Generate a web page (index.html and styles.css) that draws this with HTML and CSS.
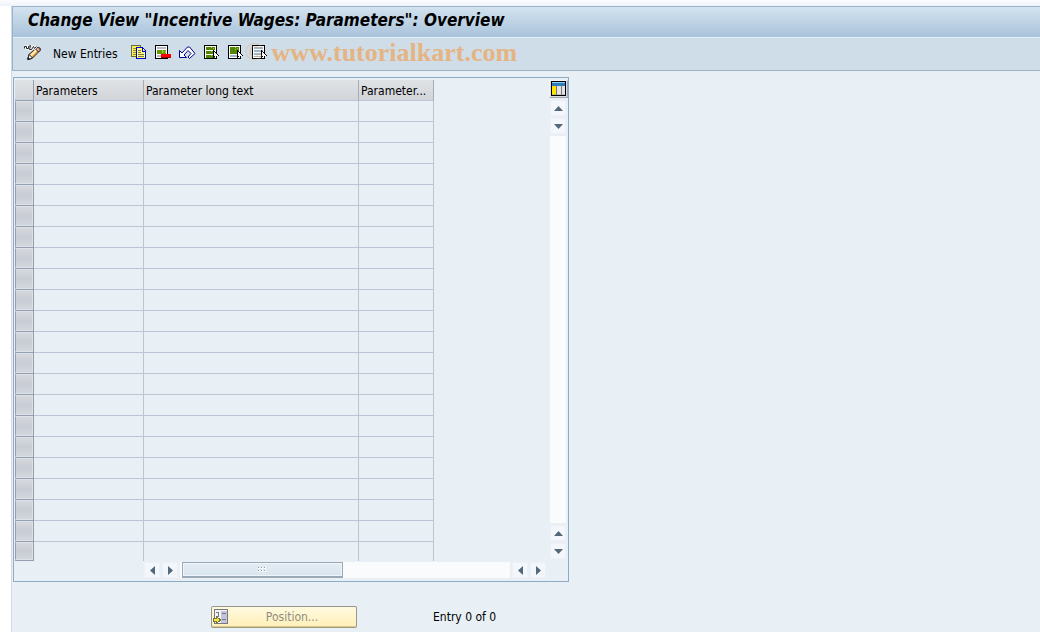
FILE: index.html
```html
<!DOCTYPE html>
<html lang="en">
<head>
    <meta charset="UTF-8">
    <meta name="viewport" content="width=device-width, initial-scale=1.0">
    <title>Change View "Incentive Wages: Parameters": Overview</title>
    <link rel="stylesheet" href="styles.css">
</head>
<body>

    <div class="window">
        <!-- Title and toolbar -->
        <header class="top">
            <h1>Change View "Incentive Wages: Parameters": Overview</h1>
            <div class="toolbar">
                <button class="tool" aria-label="Display / Change">
                    <svg width="17" height="16" viewBox="0 0 17 16">
                        <path d="M4 14.500l1-5 7-6.500 4 .5v2l-8 8z" fill="#f5a030" stroke="#222"/>
                        <path d="M6 10l6-6 1.500 1.500-6 6z" fill="#ffedc0"/>
                        <path d="M11.500 4l1.500-1.500 3 .5v2.500l-1.500 1.500z" fill="#e8b0a0" stroke="#222"/>
                        <path d="M4 14.500l1-5 3.500 3.500z" fill="#fff" stroke="#222"/>
                        <path d="M3.500 15v-3l2.500 2z" fill="#111"/>
                        <path d="M.5 3.500v-2h2v2h2v-2l2-1-1 4h2l2-3 1 2 2-2" fill="none" stroke="#fff" stroke-width="2"/>
                        <path d="M.5 3.500v-2h2v2h2v-2l2-1-1 4h2l2-3 1 2 2-2" fill="none" stroke="#222"/>
                    </svg>
                </button>
                <button class="tool text">New Entries</button>
                <button class="tool" aria-label="Copy As">
                    <svg width="16" height="16" viewBox="0 0 16 16" shape-rendering="crispEdges">
                        <path d="M.5.5h9v11h-9z" fill="#ffee55" stroke="#6b6b3a"/>
                        <path d="M2 3h4v1H2zM2 5h3v1H2zM2 7h3v1H2zM2 9h3v1H2z" fill="#8a8a50"/>
                        <path d="M5.500 2.500h6l3 3v8h-9z" fill="#ffff66" stroke="#0000dd"/>
                        <path d="M11 3h1v3h3v1h-4z" fill="#0000dd"/>
                        <path d="M7 5h3v1H7zM7 7h3v1H7zM7 9h6v1H7zM7 11h6v1H7z" fill="#77774a"/>
                    </svg>
                </button>
                <button class="tool" aria-label="Delete">
                    <svg width="16" height="16" viewBox="0 0 16 16" shape-rendering="crispEdges">
                        <path d="M.5.5h12v13H.5z" fill="#fff" stroke="#000"/>
                        <path d="M2 2h9v2H2zM2 10h9v2H2z" fill="#b8b8c8"/>
                        <path d="M2 5h9v4H2z" fill="#669900"/>
                        <path d="M7 5h1v1h1v1H8v1H7zM10 6h1v2h-1z" fill="#9c3"/>
                        <path d="M6 9h10v4H6z" fill="#f00"/>
                        <path d="M6 12h10v1H6z" fill="#900"/>
                    </svg>
                </button>
                <button class="tool" aria-label="Undo Change">
                    <svg width="17" height="16" viewBox="0 0 17 16">
                        <path d="M.5 5.500v7h7L5 10l4-4.500 3 3L9 12l1.500 1.500 5.500-5L10.500 2h-2L3 8z" fill="#fff" stroke="#00008b"/>
                    </svg>
                </button>
                <button class="tool" aria-label="Select All">
                    <svg width="16" height="16" viewBox="0 0 16 16" shape-rendering="crispEdges">
                        <path d="M.5.500h12v13H.5z" fill="#fff" stroke="#000"/>
                        <path d="M2 2h9v3H2zM2 6h9v3H2zM2 10h9v3H2z" fill="#4f8500"/>
                        <path d="M7 2h1v1H7zM9 3h1v1H9zM7 6h1v1H7zM7 10h1v1H7z" fill="#9c3"/>
                        <path d="M9 5h1v1h1v1h1v1h1v1h1v1h1v1h-2v3h-2v-2h-1v1H9z" fill="#000"/>
                        <path d="M10 7h1v1h1v1h1v1h1v1h-2v2h-1v-2h-1z" fill="#fff"/>
                    </svg>
                </button>
                <button class="tool" aria-label="Select Block">
                    <svg width="16" height="16" viewBox="0 0 16 16" shape-rendering="crispEdges">
                        <path d="M.5.500h12v13H.5z" fill="#fff" stroke="#000"/>
                        <path d="M2 2h9v7H2z" fill="#4f8500"/>
                        <path d="M7 2h1v1H7zM9 3h1v1H9zM7 4h1v1H7zM9 6h1v1H9z" fill="#9c3"/>
                        <path d="M2 10h9v2H2z" fill="#9fb4c8"/>
                        <path d="M9 5h1v1h1v1h1v1h1v1h1v1h1v1h-2v3h-2v-2h-1v1H9z" fill="#000"/>
                        <path d="M10 7h1v1h1v1h1v1h1v1h-2v2h-1v-2h-1z" fill="#fff"/>
                    </svg>
                </button>
                <button class="tool" aria-label="Deselect All">
                    <svg width="16" height="16" viewBox="0 0 16 16" shape-rendering="crispEdges">
                        <path d="M.5.500h12v13H.5z" fill="#fff" stroke="#000"/>
                        <path d="M2 2h9v2H2zM2 5h9v2H2zM2 8h9v2H2zM2 11h9v1H2z" fill="#9fb4c8"/>
                        <path d="M9 5h1v1h1v1h1v1h1v1h1v1h1v1h-2v3h-2v-2h-1v1H9z" fill="#000"/>
                        <path d="M10 7h1v1h1v1h1v1h1v1h-2v2h-1v-2h-1z" fill="#fff"/>
                    </svg>
                    <span class="copyright">©</span>
                </button>
                <span class="site">www.tutorialkart.com</span>
            </div>
        </header>

        <!-- Table control -->
        <main class="panel">
            <table class="grid">
                <colgroup>
                    <col class="col-select">
                    <col class="col-name">
                    <col class="col-text">
                    <col class="col-type">
                </colgroup>
                <thead>
                    <tr>
                        <td></td>
                        <th>Parameters</th>
                        <th>Parameter long text</th>
                        <th>Parameter...</th>
                    </tr>
                </thead>
                <tbody>
                    <tr><td><button class="row-select" aria-label="Select row 1"></button></td><td></td><td></td><td></td></tr>
                    <tr><td><button class="row-select" aria-label="Select row 2"></button></td><td></td><td></td><td></td></tr>
                    <tr><td><button class="row-select" aria-label="Select row 3"></button></td><td></td><td></td><td></td></tr>
                    <tr><td><button class="row-select" aria-label="Select row 4"></button></td><td></td><td></td><td></td></tr>
                    <tr><td><button class="row-select" aria-label="Select row 5"></button></td><td></td><td></td><td></td></tr>
                    <tr><td><button class="row-select" aria-label="Select row 6"></button></td><td></td><td></td><td></td></tr>
                    <tr><td><button class="row-select" aria-label="Select row 7"></button></td><td></td><td></td><td></td></tr>
                    <tr><td><button class="row-select" aria-label="Select row 8"></button></td><td></td><td></td><td></td></tr>
                    <tr><td><button class="row-select" aria-label="Select row 9"></button></td><td></td><td></td><td></td></tr>
                    <tr><td><button class="row-select" aria-label="Select row 10"></button></td><td></td><td></td><td></td></tr>
                    <tr><td><button class="row-select" aria-label="Select row 11"></button></td><td></td><td></td><td></td></tr>
                    <tr><td><button class="row-select" aria-label="Select row 12"></button></td><td></td><td></td><td></td></tr>
                    <tr><td><button class="row-select" aria-label="Select row 13"></button></td><td></td><td></td><td></td></tr>
                    <tr><td><button class="row-select" aria-label="Select row 14"></button></td><td></td><td></td><td></td></tr>
                    <tr><td><button class="row-select" aria-label="Select row 15"></button></td><td></td><td></td><td></td></tr>
                    <tr><td><button class="row-select" aria-label="Select row 16"></button></td><td></td><td></td><td></td></tr>
                    <tr><td><button class="row-select" aria-label="Select row 17"></button></td><td></td><td></td><td></td></tr>
                    <tr><td><button class="row-select" aria-label="Select row 18"></button></td><td></td><td></td><td></td></tr>
                    <tr><td><button class="row-select" aria-label="Select row 19"></button></td><td></td><td></td><td></td></tr>
                    <tr><td><button class="row-select" aria-label="Select row 20"></button></td><td></td><td></td><td></td></tr>
                    <tr><td><button class="row-select" aria-label="Select row 21"></button></td><td></td><td></td><td></td></tr>
                    <tr><td><button class="row-select" aria-label="Select row 22"></button></td><td></td><td></td><td></td></tr>
                </tbody>
            </table>

            <div class="side">
                <button class="config" aria-label="Configuration">
                    <svg width="15" height="15" viewBox="0 0 15 15" shape-rendering="crispEdges">
                        <path d="M0 0h15v15H0z" fill="#000"/>
                        <path d="M1 1h13v4H1z" fill="#2f7fc0"/>
                        <path d="M1 1h13v1H1z" fill="#8fd0f5"/>
                        <path d="M1 5h4v9H1z" fill="#ffe600"/>
                        <path d="M6 5h4v9H6zM11 5h3v9h-3z" fill="#e4e4e4"/>
                        <path d="M5 5h1v9H5zM10 5h1v9h-1z" fill="#777"/>
                        <path d="M1 13h13v1H1z" fill="#999" fill-opacity=".5"/>
                    </svg>
                </button>
                <div class="scroll vertical">
                    <button class="arrow" aria-label="Scroll up"><svg width="9" height="5" viewBox="0 0 9 5"><path d="M0 5l4.500-5L9 5z"/></svg></button>
                    <button class="arrow" aria-label="Scroll down"><svg width="9" height="5" viewBox="0 0 9 5"><path d="M0 0h9L4.500 5z"/></svg></button>
                    <div class="track"></div>
                    <button class="arrow" aria-label="Previous page"><svg width="9" height="5" viewBox="0 0 9 5"><path d="M0 5l4.500-5L9 5z"/></svg></button>
                    <button class="arrow" aria-label="Next page"><svg width="9" height="5" viewBox="0 0 9 5"><path d="M0 0h9L4.500 5z"/></svg></button>
                </div>
            </div>

            <div class="scroll horizontal">
                <button class="arrow" aria-label="Scroll left"><svg width="5" height="9" viewBox="0 0 5 9"><path d="M5 0v9L0 4.500z"/></svg></button>
                <button class="arrow" aria-label="Scroll right"><svg width="5" height="9" viewBox="0 0 5 9"><path d="M0 0l5 4.500L0 9z"/></svg></button>
                <div class="track">
                    <div class="thumb">
                        <svg width="8" height="5" viewBox="0 0 8 5" shape-rendering="crispEdges"><path d="M0 0h2v2H0zM3 0h2v2H3zM6 0h2v2H6zM0 3h2v2H0zM3 3h2v2H3zM6 3h2v2H6z" fill="#fff"/><path d="M0 0h1v1H0zM3 0h1v1H3zM6 0h1v1H6zM0 3h1v1H0zM3 3h1v1H3zM6 3h1v1H6z" fill="#8796a5"/></svg>
                    </div>
                </div>
                <button class="arrow" aria-label="Page left"><svg width="5" height="9" viewBox="0 0 5 9"><path d="M5 0v9L0 4.500z"/></svg></button>
                <button class="arrow" aria-label="Page right"><svg width="5" height="9" viewBox="0 0 5 9"><path d="M0 0l5 4.500L0 9z"/></svg></button>
            </div>
        </main>

        <footer class="status">
            <button class="position">
                <svg width="16" height="16" viewBox="0 0 16 16" shape-rendering="crispEdges">
                    <path d="M1.500.500h13v14h-13z" fill="#f4f4f6" stroke="#77777f"/>
                    <path d="M8 2h6v12H8z" fill="#c4c4dc"/>
                    <path d="M9 4h4v1H9zM9 10h4v1H9zM3 3h3v1H3zM5 4h1v3H5zM3 7h3v1H3z" fill="#77777f"/>
                    <path d="M.5 9.500h3v-2l4 3.500-4 3.500v-2h-3z" fill="#f5e94a" stroke="#77773a"/>
                </svg>
                <span>Position...</span>
            </button>
            <span>Entry 0 of 0</span>
        </footer>
    </div>

</body>
</html>
```

FILE: styles.css
```css
* {
    box-sizing: border-box;
}
body {
    margin: 0;
    padding: 6px 0 0 11px;
    min-height: 100vh;
    display: flex;
    background: linear-gradient(#fbfcfe, #eef3f9 6px, transparent 6px), #fff;
    color: #000;
    font-family: Tahoma, 'DejaVu Sans Condensed', sans-serif;
    font-size: 12px;
    line-height: 16px;
}
button {
    margin: 0;
    padding: 0;
    border: none;
    background: none;
    color: inherit;
    font: inherit;
}
svg {
    display: block;
}
.window {
    flex: 1;
    background-color: #e8f0f6;
    border-left: 1px solid #d0dae5;
}
.top {
    border: 1px solid #9db2c8;
    border-width: 1px 0 1px 1px;
}
h1 {
    margin: 0;
    padding: 3px 15px 7px;
    border-bottom: 1px solid #e6eef5;
    background: linear-gradient(#d3e2ef, #a9c3db);
    font-size: 17px;
    font-style: italic;
    line-height: 20px;
}
.toolbar {
    display: flex;
    align-items: center;
    gap: 8px;
    height: 32px;
    padding: 0 11px 2px;
    background-color: #cfdde8;
}
.tool {
    position: relative;
}
.tool.text {
    padding: 2px 5px 0 4px;
}
.copyright {
    position: absolute;
    left: -7px;
    top: -6px;
    color: #f0a050;
    font-family: 'Liberation Serif', serif;
    font-size: 26px;
    line-height: 26px;
    opacity: 0.3;
}
.site {
    margin-left: -4px;
    color: #e5b483;
    font-family: 'Liberation Serif', serif;
    font-size: 26px;
    font-weight: bold;
    line-height: 28px;
}
.panel {
    display: grid;
    grid-template-columns: auto 16px;
    width: fit-content;
    margin: 6px 0 0 1px;
    padding: 2px 2px 3px 1px;
    border: 1px solid #8eabc6;
}
.grid {
    border-collapse: separate;
    border-spacing: 0;
    table-layout: fixed;
    width: 419px;
    margin-right: 116px;
}
.col-select {
    width: 19px;
}
.col-name {
    width: 110px;
}
.col-text {
    width: 215px;
}
.col-type {
    width: 75px;
}
.grid td, .grid th {
    height: 21px;
    padding: 0;
    border-right: 1px solid #bcc5d3;
    border-bottom: 1px solid #bcc5d3;
}
.grid th, .grid thead td {
    background: linear-gradient(#e0e3e6, #d1d5d9);
    border-right-color: #a3adb9;
}
.grid th {
    padding: 2px 0 0 2px;
    font-weight: normal;
    text-align: left;
}
.grid tr td:first-child {
    border-bottom-color: #94a0b2;
    border-right-color: #94a0b2;
}
.grid tbody tr:last-child td {
    height: 19px;
}
.grid tbody tr:last-child td:not(:first-child) {
    border-bottom: none;
}
.row-select {
    display: block;
    width: 100%;
    height: 20px;
    border: 1px solid #dde1e6;
    border-left-color: #94a0b2;
    background: linear-gradient(#d5d8dd, #c8ccd4, #d2d7de);
}
.grid tbody tr:last-child .row-select {
    height: 18px;
}
.side {
    display: flex;
    flex-direction: column;
    align-items: center;
    gap: 2px;
}
.config {
    padding: 0 1px 1px;
    border: 1px solid #f3f5f7;
    border-right-color: #a0a7b0;
    border-bottom-color: #a0a7b0;
    background-color: #dadde1;
}
.scroll {
    display: flex;
    gap: 2px;
}
.vertical {
    flex: 1;
    flex-direction: column;
    padding-bottom: 2px;
}
.horizontal {
    margin: 1px 4px 0 129px;
}
.arrow {
    display: flex;
    align-items: center;
    justify-content: center;
    width: 16px;
    height: 16px;
    border: 1px solid #edf1f7;
    background-color: #f3f6fb;
}
.arrow svg {
    fill: #536878;
}
.track {
    flex: 1;
    background-color: #fafbfc;
}
.horizontal .track {
    padding-left: 2px;
}
.thumb {
    display: flex;
    align-items: center;
    justify-content: center;
    width: 49%;
    height: 16px;
    border: 1px solid #9ba8b5;
    border-bottom-width: 2px;
    background: linear-gradient(#e3edf5, #d9e5ee);
    box-shadow: inset 0 0 0 1px #eff5f9;
}
.status {
    display: flex;
    align-items: center;
    gap: 76px;
    padding: 24px 0 4px 199px;
}
.position {
    display: flex;
    align-items: center;
    width: 146px;
    height: 22px;
    padding: 0 1px;
    border: 1px solid #999792;
    border-bottom-color: #a09a80;
    border-radius: 2px;
    background: linear-gradient(#fff9df, #fff0b8);
    box-shadow: inset 0 -1px #d8c88d;
    color: #8f8d80;
}
.position span {
    flex: 1;
    text-align: center;
}
```
